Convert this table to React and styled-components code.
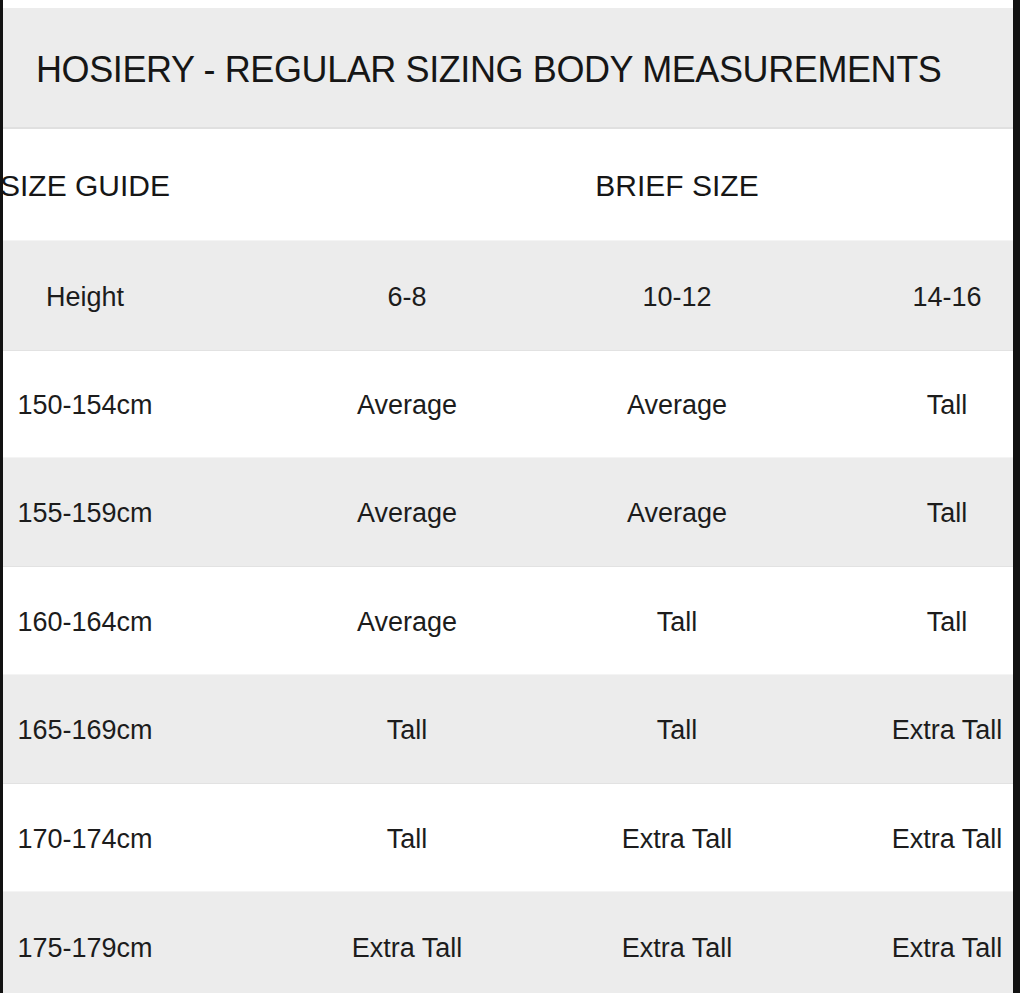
import React from 'react'
import styled, { createGlobalStyle } from 'styled-components'

const GlobalStyle = createGlobalStyle`
  html, body {
    margin: 0;
    padding: 0;
    background: #ffffff;
  }
  body {
    font-family: "Liberation Sans", Arial, sans-serif;
    color: #1c1c1c;
  }
`

const rows = [
  { h: '150-154cm', v: ['Average', 'Average', 'Tall'], height: 107 },
  { h: '155-159cm', v: ['Average', 'Average', 'Tall'], height: 109 },
  { h: '160-164cm', v: ['Average', 'Tall', 'Tall'], height: 108 },
  { h: '165-169cm', v: ['Tall', 'Tall', 'Extra Tall'], height: 109 },
  { h: '170-174cm', v: ['Tall', 'Extra Tall', 'Extra Tall'], height: 108 },
  { h: '175-179cm', v: ['Extra Tall', 'Extra Tall', 'Extra Tall'], height: 110 },
]

function App() {
  return (
    <>
      <GlobalStyle />
      <Frame>
        <Edge $w={3} />
        <Sheet>
          <TitleBar>HOSIERY - REGULAR SIZING BODY MEASUREMENTS</TitleBar>
          <Row $h={112}>
            <FirstCell><Heading>SIZE GUIDE</Heading></FirstCell>
            <SpanCell><Heading>BRIEF SIZE</Heading></SpanCell>
          </Row>
          <Row $grey $h={110}>
            <FirstCell>Height</FirstCell>
            <Cell>6-8</Cell>
            <Cell>10-12</Cell>
            <Cell>14-16</Cell>
          </Row>
          {rows.map((r, i) => (
            <Row key={r.h} $grey={i % 2 === 1} $h={r.height}>
              <FirstCell>{r.h}</FirstCell>
              {r.v.map((t, j) => <Cell key={j}>{t}</Cell>)}
            </Row>
          ))}
        </Sheet>
        <Edge $w={7} />
      </Frame>
    </>
  )
}

export default App

const Frame = styled.div`
  display: flex;
  width: 1020px;
  height: 993px;
  overflow: hidden;
`

const Edge = styled.div`
  flex: 0 0 ${p => p.$w}px;
  background: #121212;
`

const Sheet = styled.div`
  flex: 1;
  overflow: hidden;
  padding-top: 8px;
  background: #ffffff;
`

const TitleBar = styled.div`
  height: 121px;
  box-sizing: border-box;
  padding-top: 5px;
  border-bottom: 2px solid #e0e0e0;
  background: #ececec;
  display: flex;
  align-items: center;
  padding-left: 33px;
  font-size: 36px;
  letter-spacing: -0.4px;
  white-space: nowrap;
  color: #161616;
`

const Row = styled.div`
  display: grid;
  grid-template-columns: 269px 270px 270px 270px;
  height: ${p => p.$h}px;
  box-sizing: border-box;
  padding-top: 3px;
  background: ${p => (p.$grey ? '#ececec' : '#ffffff')};
  border-bottom: 1px solid ${p => (p.$grey ? '#e2e2e2' : '#f4f4f4')};
`

const Cell = styled.div`
  display: flex;
  align-items: center;
  justify-content: center;
  font-size: 27px;
  white-space: nowrap;
`

const FirstCell = styled(Cell)`
  padding-right: 105px;
`

const SpanCell = styled(Cell)`
  grid-column: 2 / 5;
`

const Heading = styled.span`
  font-size: 30px;
  color: #161616;
`
